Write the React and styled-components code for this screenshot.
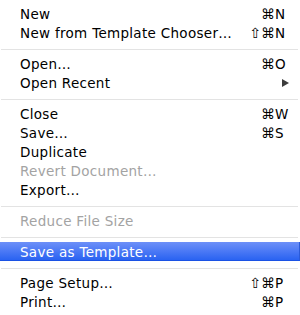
import React from "react";
import styled, { createGlobalStyle } from "styled-components";

const GlobalStyle = createGlobalStyle`
  html, body {
    margin: 0;
    padding: 0;
    background: #ffffff;
  }
`;

const Menu = styled.div`
  width: 300px;
  height: 315px;
  box-sizing: border-box;
  padding-top: 4px;
  background: #ffffff;
  font-family: "DejaVu Sans", "Liberation Sans", sans-serif;
  font-size: 13.5px;
  letter-spacing: 0.3px;
  overflow: hidden;
`;

const Item = styled.div`
  height: 19px;
  display: flex;
  align-items: center;
  padding: 0 13px 0 20px;
  color: ${(p) => (p.$disabled ? "#a3a3a3" : p.$active ? "#ffffff" : "#000000")};
  background: ${(p) =>
    p.$active ? "linear-gradient(#6d90f8 0%, #4a78f5 50%, #2660f1 100%)" : "transparent"};
  box-shadow: ${(p) => (p.$active ? "inset 0 -1px 0 #1a52e4, inset -1px 0 0 #2a5ad8" : "none")};
  white-space: nowrap;
`;

const Label = styled.span`
  flex: 1;
`;

const Shortcut = styled.span`
  display: flex;
  letter-spacing: 0;
`;

const Mods = styled.span`
  text-align: right;
  font-size: 14px;
`;

const Key = styled.span`
  width: 12px;
  text-align: left;
`;

const Arrow = styled.span`
  width: 0;
  height: 0;
  margin-right: -2px;
  border-top: 4px solid transparent;
  border-bottom: 4px solid transparent;
  border-left: 7px solid #3c3c3c;
`;

const Separator = styled.div`
  height: 1px;
  margin: 7px 2px 4px 1px;
  background: #e3e3e3;
`;

const sections = [
  [
    { label: "New", mods: "⌘", key: "N" },
    { label: "New from Template Chooser…", mods: "⇧⌘", key: "N" },
  ],
  [
    { label: "Open…", mods: "⌘", key: "O" },
    { label: "Open Recent", submenu: true },
  ],
  [
    { label: "Close", mods: "⌘", key: "W" },
    { label: "Save…", mods: "⌘", key: "S" },
    { label: "Duplicate" },
    { label: "Revert Document…", disabled: true },
    { label: "Export…" },
  ],
  [{ label: "Reduce File Size", disabled: true }],
  [{ label: "Save as Template…", active: true }],
  [
    { label: "Page Setup…", mods: "⇧⌘", key: "P" },
    { label: "Print…", mods: "⌘", key: "P" },
  ],
];

const App = () => (
  <>
    <GlobalStyle />
    <Menu>
      {sections.map((group, gi) => (
        <React.Fragment key={gi}>
          {gi > 0 && <Separator />}
          {group.map((item) => (
            <Item key={item.label} $disabled={item.disabled} $active={item.active}>
              <Label>{item.label}</Label>
              {item.key && (
                <Shortcut>
                  <Mods>{item.mods}</Mods>
                  <Key>{item.key}</Key>
                </Shortcut>
              )}
              {item.submenu && <Arrow />}
            </Item>
          ))}
        </React.Fragment>
      ))}
    </Menu>
  </>
);

export default App;
